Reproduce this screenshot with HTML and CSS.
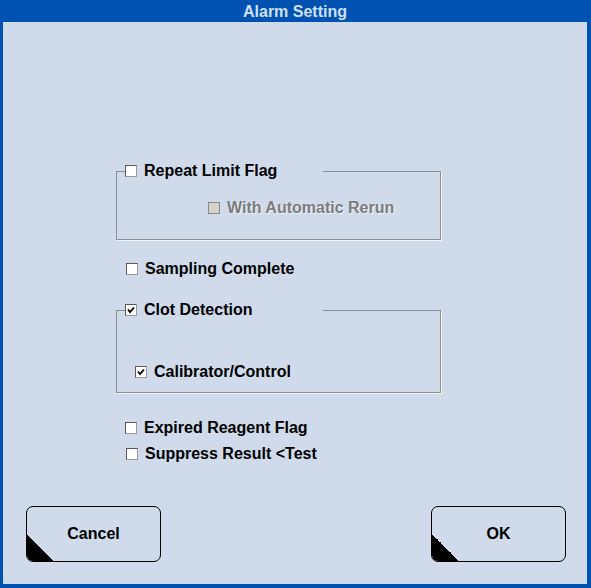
FILE: index.html
```html
<!DOCTYPE html>
<html>
<head>
<title>Alarm Setting</title>
<link rel="stylesheet" href="styles.css">
</head>
<body>
<div class="window">
  <div class="title">Alarm Setting</div>
  <div class="content">

    <fieldset class="group group-repeat">
      <legend><span class="box"></span>Repeat Limit Flag</legend>
      <div class="row row-rerun disabled"><span class="box"></span>With Automatic Rerun</div>
    </fieldset>

    <div class="row row-sampling"><span class="box"></span>Sampling Complete</div>

    <fieldset class="group group-clot">
      <legend><span class="box checked"><svg viewBox="0 0 10 10"><polyline points="2,4.5 4,7 8,2.5"/></svg></span>Clot Detection</legend>
      <div class="row row-calib"><span class="box checked"><svg viewBox="0 0 10 10"><polyline points="2,4.5 4,7 8,2.5"/></svg></span>Calibrator/Control</div>
    </fieldset>

    <div class="row row-expired"><span class="box"></span>Expired Reagent Flag</div>
    <div class="row row-suppress"><span class="box"></span>Suppress Result &lt;Test</div>

    <div class="buttons">
      <div class="button">Cancel</div>
      <div class="button">OK</div>
    </div>
  </div>
</div>
</body>
</html>
```

FILE: styles.css
```css
/* Alarm Setting dialog */

body
{ margin: 0;
  font-family: "Liberation Sans", Arial, sans-serif;
}

div.window
{ width: 584px;
  height: 584px;
  background-color: #0052b2;
  border-left: 3px solid #0052b2;
  border-right: 4px solid #0052b2;
  border-bottom: 4px solid #0052b2;
  display: flex;
  flex-direction: column;
}

div.title
{ height: 22px;
  line-height: 23px;
  text-align: center;
  font-size: 16px;
  font-weight: bold;
  color: #cfe0f4;
}

div.content
{ flex: 1;
  background-color: #cfdbeb;
  display: flex;
  flex-direction: column;
  padding-left: 113px;
  font-size: 16px;
  font-weight: bold;
  color: #000;
}

/* Group boxes */

fieldset.group
{ width: 323px;
  margin: 0;
  padding: 0;
  border: 1px solid #8c8f96;
  box-shadow: 1px 1px 0 #f2f6fb;
  box-sizing: content-box;
}

fieldset.group legend
{ width: 198px;
  height: 18px;
  line-height: 18px;
  margin-left: 8px;
  padding: 0;
  display: flex;
  align-items: center;
}

.group-repeat
{ margin-top: 140px !important;
  padding-top: 19px !important;
  padding-bottom: 22px !important;
}

.group-clot
{ margin-top: 23px !important;
  padding-top: 44px !important;
  padding-bottom: 11px !important;
}

/* Check rows */

div.row
{ height: 18px;
  line-height: 18px;
  display: flex;
  align-items: center;
  white-space: nowrap;
}

span.box
{ width: 10px;
  height: 10px;
  background-color: #fff;
  border: 1px solid #5a5a5a;
  border-right-color: #9a9a9a;
  border-bottom-color: #9a9a9a;
  margin-right: 7px;
  flex: none;
  display: flex;
}

span.box svg
{ width: 10px;
  height: 10px;
}

span.box polyline
{ fill: none;
  stroke: #000;
  stroke-width: 1.8;
}

div.disabled
{ color: #7d7d7d;
  text-shadow: 1px 1px 0 #eef2f8;
}

div.disabled span.box
{ background-color: #d6d2ca;
  border-color: #8a8a8a;
}

.row-rerun { margin-left: 91px; }
.row-sampling { margin-top: 20px; margin-left: 10px; }
.row-calib { margin-left: 18px; }
.row-expired { margin-top: 26px; margin-left: 9px; }
.row-suppress { margin-top: 8px; margin-left: 10px; }

/* Buttons */

div.buttons
{ margin-top: 43px;
  margin-left: -113px;
  padding: 0 21px 0 23px;
  display: flex;
  justify-content: space-between;
}

div.button
{ position: relative;
  width: 133px;
  height: 54px;
  border: 1px solid #000;
  border-radius: 7px;
  overflow: hidden;
  display: flex;
  align-items: center;
  justify-content: center;
  font-size: 16px;
  box-sizing: content-box;
}

div.button::after
{ content: "";
  position: absolute;
  left: 0;
  bottom: 0;
  width: 27px;
  height: 27px;
  background: linear-gradient(to top right, #000 50%, transparent 50%);
}
```
